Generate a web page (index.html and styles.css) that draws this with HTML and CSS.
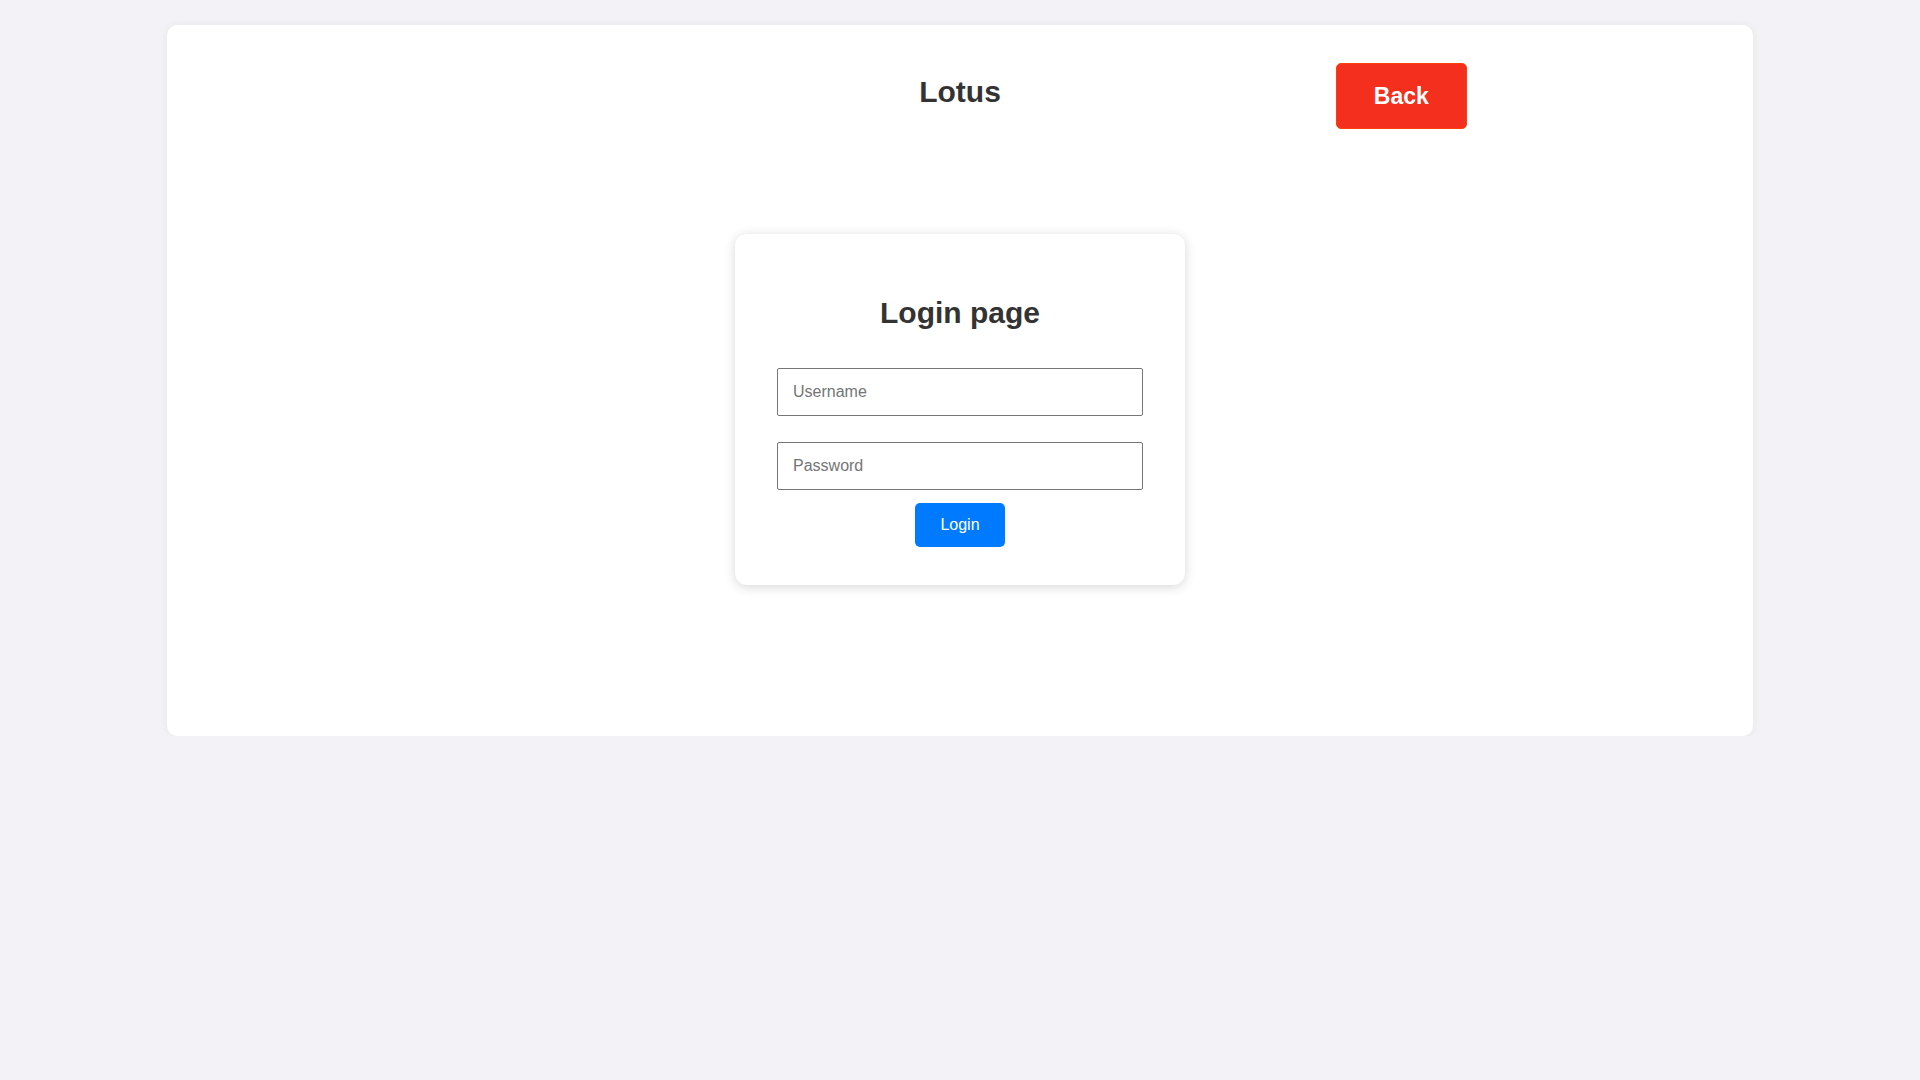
FILE: index.html
```html
<!DOCTYPE html>
<html lang="en">
<head>
<meta charset="utf-8">
<title>Lotus - Login</title>
<link rel="stylesheet" href="styles.css">
</head>
<body>
  <div class="container">
    <header class="header">
      <div class="spacer"></div>
      <h1 class="brand">Lotus</h1>
      <div class="actions"><button class="back-btn" type="button">Back</button></div>
    </header>
    <main class="main">
      <form class="login-card" onsubmit="return false;">
        <h2 class="login-title">Login page</h2>
        <input class="field" type="text" placeholder="Username">
        <input class="field field-last" type="password" placeholder="Password">
        <button class="login-btn" type="submit">Login</button>
      </form>
    </main>
  </div>
</body>
</html>
```
FILE: styles.css
```css
html, body {
  margin: 0;
  padding: 0;
}
body {
  background: #f3f3f7;
  font-family: "Liberation Sans", Arial, sans-serif;
  color: #333333;
}
.container {
  box-sizing: border-box;
  width: 1586px;
  height: 711px;
  margin: 25px auto 0;
  padding-top: 38px;
  background: #ffffff;
  border-radius: 10px;
  box-shadow: 0 0 10px rgba(0, 0, 0, 0.06);
}
.header {
  display: grid;
  grid-template-columns: 1fr auto 1fr;
  align-items: start;
}
.brand {
  margin: 12px 0 0;
  font-size: 30px;
  font-weight: bold;
  color: #333333;
  line-height: normal;
}
.actions {
  display: flex;
  justify-content: flex-start;
  padding-left: 335px;
}
.back-btn {
  box-sizing: border-box;
  width: 131px;
  height: 66px;
  background: #f42f1e;
  border: 1px solid #ff3f0a;
  border-radius: 5px;
  color: #ffffff;
  font-family: "Liberation Sans", Arial, sans-serif;
  font-size: 23px;
  font-weight: bold;
  padding: 0;
  cursor: pointer;
}
.main {
  display: flex;
  justify-content: center;
  padding-top: 105px;
}
.login-card {
  box-sizing: border-box;
  width: 450px;
  padding: 40px 42px 38px;
  background: #ffffff;
  border-radius: 12px;
  box-shadow: 0 2px 12px rgba(0, 0, 0, 0.16);
  display: flex;
  flex-direction: column;
  align-items: center;
}
.login-title {
  margin: 22px 0 38px;
  font-size: 30px;
  font-weight: bold;
  line-height: normal;
  color: #333333;
}
.field {
  box-sizing: border-box;
  width: 100%;
  height: 48px;
  margin: 0 0 26px;
  padding: 0 15px;
  border: 1px solid #767676;
  border-radius: 2px;
  font-family: "Liberation Sans", Arial, sans-serif;
  font-size: 16px;
  color: #333333;
  background: #ffffff;
}
.field::placeholder {
  color: #757575;
}
.field-last {
  margin-bottom: 13px;
}
.login-btn {
  box-sizing: border-box;
  width: 90px;
  height: 44px;
  padding: 0;
  background: #007bff;
  border: none;
  border-radius: 5px;
  color: #ffffff;
  font-family: "Liberation Sans", Arial, sans-serif;
  font-size: 16px;
  cursor: pointer;
}
```
